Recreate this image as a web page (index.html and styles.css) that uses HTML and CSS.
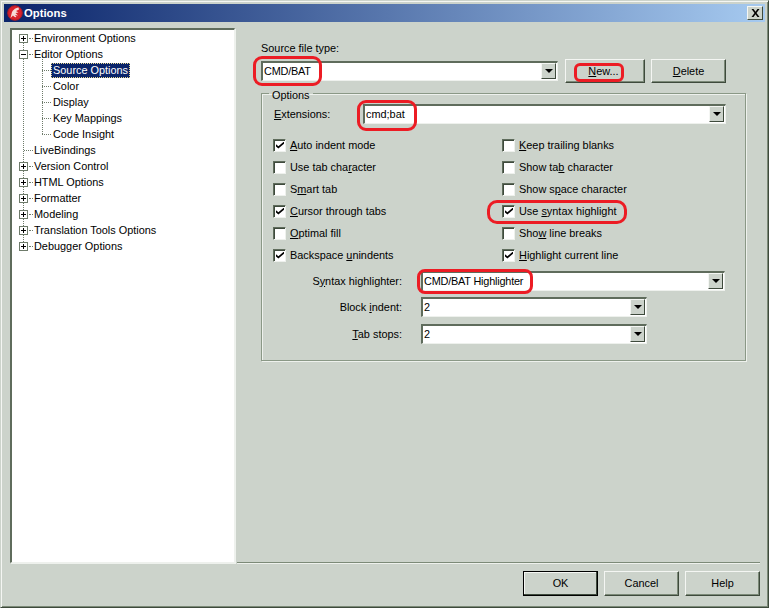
FILE: index.html
```html
<!DOCTYPE html>
<html lang="en">
<head>
<meta charset="utf-8">
<title>Options</title>
<link rel="stylesheet" href="styles.css">
</head>
<body>
<div class="window">
  <header class="titlebar">
    <svg class="appicon" viewBox="0 0 16 16" width="16" height="16"><circle cx="8" cy="8" r="7.3" fill="#d8222c" stroke="#a81c26" stroke-width="1"/><path d="M11.5 2.5 C8 3 5 5.5 4.5 9 L3.5 13 L6 10.5 C6.5 11.5 8 12.5 9.5 12 L8 10 L11 10.5 L8.5 8 L11.5 7.5 L9 6 L12 4.5 Z" fill="#f6dcd8"/></svg>
    <span class="title">Options</span>
    <button class="closebtn" aria-label="Close"><svg viewBox="0 0 9 8" width="9" height="8"><path d="M0.5 0 L2.5 0 L4.5 2.8 L6.5 0 L8.5 0 L5.5 4 L8.5 8 L6.5 8 L4.5 5.2 L2.5 8 L0.5 8 L3.5 4 Z" fill="#000"/></svg></button>
  </header>
  <div class="main">
    <nav class="tree">
      <div class="node"><span class="exp plus"></span><span class="dots"></span><span class="lbl">Environment Options</span></div>
      <div class="node"><span class="exp"></span><span class="dots"></span><span class="lbl">Editor Options</span></div>
      <div class="node child"><span class="dots"></span><span class="lbl sel">Source Options</span></div>
      <div class="node child"><span class="dots"></span><span class="lbl">Color</span></div>
      <div class="node child"><span class="dots"></span><span class="lbl">Display</span></div>
      <div class="node child"><span class="dots"></span><span class="lbl">Key Mappings</span></div>
      <div class="node child"><span class="dots"></span><span class="lbl">Code Insight</span></div>
      <div class="node leaf"><span class="dots"></span><span class="lbl">LiveBindings</span></div>
      <div class="node"><span class="exp plus"></span><span class="dots"></span><span class="lbl">Version Control</span></div>
      <div class="node"><span class="exp plus"></span><span class="dots"></span><span class="lbl">HTML Options</span></div>
      <div class="node"><span class="exp plus"></span><span class="dots"></span><span class="lbl">Formatter</span></div>
      <div class="node"><span class="exp plus"></span><span class="dots"></span><span class="lbl">Modeling</span></div>
      <div class="node"><span class="exp plus"></span><span class="dots"></span><span class="lbl">Translation Tools Options</span></div>
      <div class="node"><span class="exp plus"></span><span class="dots"></span><span class="lbl">Debugger Options</span></div>
      <span class="vline"></span>
      <span class="vline2"></span>
    </nav>
    <section class="panel">
      <div class="srclabel">Source file type:</div>
      <div class="srcrow">
        <div class="combo src"><span class="val">CMD/BAT</span><span class="arrow"></span></div>
        <button class="btn new"><u>N</u>ew...</button>
        <button class="btn"><u>D</u>elete</button>
      </div>
      <fieldset class="group">
        <legend>Options</legend>
        <div class="extrow">
          <label class="extlabel"><u>E</u>xtensions:</label>
          <div class="combo ext"><span class="val">cmd;bat</span><span class="arrow"></span></div>
        </div>
        <div class="checks">
          <div class="chk on"><i></i><span><u>A</u>uto indent mode</span></div>
          <div class="chk"><i></i><span><u>K</u>eep trailing blanks</span></div>
          <div class="chk"><i></i><span>Use tab cha<u>r</u>acter</span></div>
          <div class="chk"><i></i><span>Show ta<u>b</u> character</span></div>
          <div class="chk"><i></i><span>S<u>m</u>art tab</span></div>
          <div class="chk"><i></i><span>Show s<u>p</u>ace character</span></div>
          <div class="chk on"><i></i><span><u>C</u>ursor through tabs</span></div>
          <div class="chk on"><i></i><span>Use <u>s</u>yntax highlight</span></div>
          <div class="chk"><i></i><span><u>O</u>ptimal fill</span></div>
          <div class="chk"><i></i><span>Sho<u>w</u> line breaks</span></div>
          <div class="chk on"><i></i><span>Backspace <u>u</u>nindents</span></div>
          <div class="chk on"><i></i><span><u>H</u>ighlight current line</span></div>
        </div>
        <div class="formrow first"><label>S<u>y</u>ntax highlighter:</label><div class="combo wide"><span class="val">CMD/BAT Highlighter</span><span class="arrow"></span></div></div>
        <div class="formrow second"><label>Block <u>i</u>ndent:</label><div class="combo short"><span class="val">2</span><span class="arrow"></span></div></div>
        <div class="formrow third"><label><u>T</u>ab stops:</label><div class="combo short"><span class="val">2</span><span class="arrow"></span></div></div>
      </fieldset>
    </section>
  </div>
  <footer class="footer">
    <button class="btn def">OK</button>
    <button class="btn">Cancel</button>
    <button class="btn">Help</button>
  </footer>
  <span class="mark m1"></span>
  <span class="mark m2"></span>
  <span class="mark m3"></span>
  <span class="mark m4"></span>
  <span class="mark m5"></span>
</div>
</body>
</html>
```
FILE: styles.css
```css
* { box-sizing: border-box; }
html, body { margin: 0; padding: 0; }
body { width: 769px; height: 608px; overflow: hidden; font: 10.9px/13px "Liberation Sans", Arial, sans-serif; color: #000; background: #ccd3cb; }
u { text-decoration: underline; text-underline-offset: 1px; }
.window { position: relative; width: 769px; height: 608px; background: #ccd3cb; padding: 4px; border: 1px solid #3e4a3c; border-top-color: #ccd3cb; border-left-color: #ccd3cb; box-shadow: inset 1px 1px 0 #f4f6f3, inset -1px -1px 0 #7c8a78; display: flex; flex-direction: column; }
.titlebar { height: 18px; margin: -1px -1px 0 -1px; flex: none; display: flex; align-items: center; padding: 0 2px 0 3px; background: linear-gradient(90deg, #0a246a, #a6caf0); }
.appicon { flex: none; }
.title { margin-left: 1px; color: #fff; font-weight: bold; font-size: 11.3px; }
.closebtn { margin-left: auto; width: 16px; height: 14px; padding: 0; display: flex; align-items: center; justify-content: center; background: #ccd3cb; border: 1px solid #3e4a3c; border-top-color: #f4f6f3; border-left-color: #f4f6f3; }
.main { flex: 1; display: flex; min-height: 0; }
.tree { position: relative; margin: 6px 0 0 5px; width: 225px; height: 535px; flex: none; background: #fff; border: 2px solid #5f6c5c; border-right: 1px solid #eef1ed; border-bottom: 1px solid #eef1ed; box-shadow: 1px 1px 0 #eef1ed; }
.node { display: flex; align-items: center; height: 16px; padding-left: 7px; position: relative; z-index: 1; white-space: nowrap; }
.exp { width: 9px; height: 9px; flex: none; border: 1px solid #6e7b6a; background: linear-gradient(#000, #000) center / 5px 1px no-repeat, #fff; }
.exp.plus { background: linear-gradient(#000, #000) center / 5px 1px no-repeat, linear-gradient(#000, #000) center / 1px 5px no-repeat, #fff; }
.dots { width: 4px; height: 1px; flex: none; margin-left: 1px; border-top: 1px dotted #6e7b6a; }
.leaf .dots { width: 9px; margin-left: 5px; }
.child { padding-left: 30px; }
.child .dots { width: 9px; margin: 0; }
.lbl { padding: 1px 2px; margin-left: -1px; line-height: 13px; }
.child .lbl { margin-left: 0; }
.leaf .lbl { margin-left: 0; padding-left: 1px; }
.sel { background: #0a246a; color: #fff; outline: 1px dotted #e8d890; outline-offset: -1px; }
.vline { position: absolute; left: 11px; top: 10px; height: 206px; width: 0; border-left: 1px dotted #6e7b6a; }
.vline2 { position: absolute; left: 30px; top: 26px; height: 78px; width: 0; border-left: 1px dotted #6e7b6a; }
.panel { flex: 1; padding: 20px 0 0 26px; min-width: 0; }
.srclabel { height: 13px; }
.srcrow { display: flex; align-items: center; gap: 7px; height: 24px; margin-top: 4px; }
.combo { position: relative; display: flex; align-items: center; height: 20px; background: #fff; border: 2px solid #5f6c5c; border-right: 1px solid #eef1ed; border-bottom: 1px solid #eef1ed; padding-left: 1px; }
.val { line-height: 13px; }
.src .val, .wide .val { letter-spacing: -0.2px; }
.arrow { position: absolute; right: 1px; top: 0; bottom: 1px; width: 15px; background: #ccd3cb; border: 1px solid #3e4a3c; border-top-color: #f4f6f3; border-left-color: #f4f6f3; }
.arrow::after { content: ""; position: absolute; left: 3px; top: 5px; border: 4px solid transparent; border-top: 4px solid #000; border-bottom: 0; }
.combo.src { width: 297px; }
.btn { font: inherit; width: 75px; height: 25px; padding: 0; color: #000; background: #ccd3cb; border: 1px solid #3e4a3c; border-top-color: #f4f6f3; border-left-color: #f4f6f3; box-shadow: inset -1px -1px 0 #7c8a78; }
.btn.new { width: 80px; height: 24px; margin-right: -1px; padding-right: 3px; }
.srcrow .btn { height: 24px; }
.group { position: relative; width: 485px; height: 274px; margin: 4px 0 0 0; padding: 0 0 0 12px; border: 1px solid #8a9886; box-shadow: inset 1px 1px 0 #eef1ed, 1px 1px 0 #eef1ed; }
.group legend { position: relative; top: 2px; padding: 0 3px; margin-left: -5px; line-height: 13px; }
.extrow { display: flex; align-items: center; margin-top: 4px; height: 20px; }
.extlabel { width: 89px; }
.combo.ext { width: 363px; }
.checks { display: grid; grid-template-columns: 229px 220px; grid-auto-rows: 22px; margin-top: 10px; margin-left: -1px; }
.chk { display: flex; align-items: center; }
.chk i { position: relative; width: 13px; height: 13px; margin-right: 4px; background: #fff; border: 1px solid #eef1ed; border-top: 1px solid #5f6c5c; border-left: 1px solid #5f6c5c; box-shadow: inset 1px 1px 0 #3e4a3c; flex: none; }
.chk span { white-space: nowrap; }
.chk.on i::after { content: ""; position: absolute; left: 2px; top: 2px; width: 8px; height: 7px; background: #000; clip-path: polygon(0 40%, 30% 68%, 100% 0, 100% 32%, 30% 100%, 0 72%); }
.formrow { display: flex; align-items: center; position: relative; }
.formrow label { width: 128px; text-align: right; margin-right: 19px; }
.combo.wide { width: 304px; }
.combo.short { width: 226px; }
.first { margin-top: 5px; height: 20px; }
.second { margin-top: 6px; height: 20px; }
.third { margin-top: 7px; height: 20px; }
.footer { flex: none; height: 41px; margin-left: 232px; margin-right: 4px; border-top: 1px solid #7c8a78; box-shadow: inset 0 1px 0 #eef1ed; display: flex; justify-content: flex-end; gap: 6px; padding-top: 8px; }
.btn.def { border: 1px solid #000; box-shadow: inset -1px -1px 0 #3e4a3c, inset 1px 1px 0 #f4f6f3; }
.mark { position: absolute; border: 3px solid #ec1c24; pointer-events: none; }
.m1 { left: 252px; top: 55px; width: 69px; height: 30px; border-radius: 9px; }
.m2 { left: 573px; top: 62px; width: 50px; height: 19px; border-radius: 6px; }
.m3 { left: 356px; top: 99px; width: 60px; height: 31px; border-radius: 9px; }
.m4 { left: 486px; top: 199px; width: 140px; height: 24px; border-radius: 10px; }
.m5 { left: 416px; top: 268px; width: 116px; height: 25px; border-radius: 8px; }
```
